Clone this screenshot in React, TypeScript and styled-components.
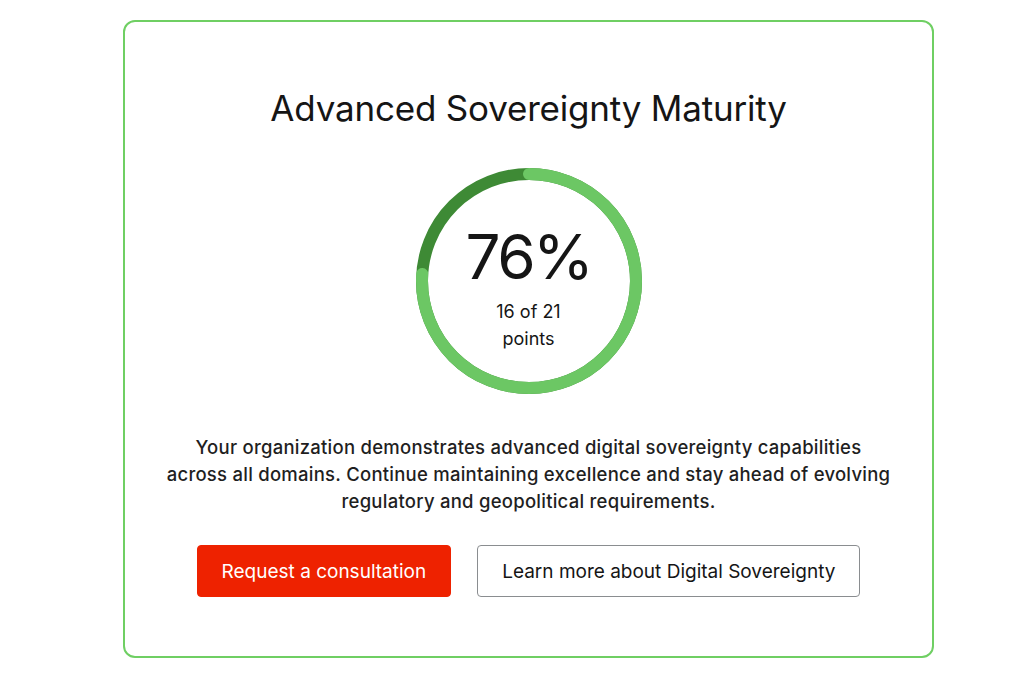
import styled, { createGlobalStyle } from "styled-components";

const GlobalStyle = createGlobalStyle`
  html, body {
    margin: 0;
    padding: 0;
    background: #ffffff;
  }
  body {
    font-family: Inter, "Noto Sans", "Liberation Sans", sans-serif;
    color: #151515;
  }
`;

const score = { percent: 76, points: 16, total: 21 };

const Page = styled.div`
  padding: 20px 90px 24px 123px;
`;

const Card = styled.section`
  box-sizing: border-box;
  width: 811px;
  height: 638px;
  border: 2px solid #6fcf63;
  border-radius: 12px;
  display: flex;
  flex-direction: column;
  align-items: center;
  padding-top: 62px;
`;

const Title = styled.h2`
  margin: 0;
  font-size: 35px;
  font-weight: 400;
  letter-spacing: -0.2px;
  line-height: 48px;
  color: #151515;
`;

const Gauge = styled.div`
  position: relative;
  width: 230px;
  height: 230px;
  margin-top: 34px;
`;

const GaugeLabel = styled.div`
  position: absolute;
  inset: 0;
  display: flex;
  flex-direction: column;
  align-items: center;
  justify-content: center;
  padding-top: 10px;
`;

const Percent = styled.div`
  font-size: 62px;
  font-weight: 400;
  letter-spacing: -2.5px;
  line-height: 74px;
  margin-bottom: 4px;
`;

const Points = styled.div`
  font-size: 18px;
  line-height: 27px;
  text-align: center;
  width: 80px;
`;

const Summary = styled.p`
  margin: 38px 0 0;
  text-align: center;
  font-size: 18.5px;
  font-weight: 500;
  letter-spacing: 0.25px;
  line-height: 27px;
  color: #1f1f1f;
`;

const Actions = styled.div`
  display: flex;
  gap: 26px;
  margin-top: 30px;
`;

const Button = styled.button<{ $primary?: boolean }>`
  box-sizing: border-box;
  height: 52px;
  padding: 0 24px;
  border-radius: 4px;
  font-family: inherit;
  font-size: 19px;
  font-weight: 400;
  cursor: pointer;
  border: 1px solid ${({ $primary }) => ($primary ? "#ee2200" : "#8a8d90")};
  background: ${({ $primary }) => ($primary ? "#ee2200" : "#ffffff")};
  color: ${({ $primary }) => ($primary ? "#ffffff" : "#151515")};
`;

const Ring = ({ percent }: { percent: number }) => {
  const r = 107;
  const c = 2 * Math.PI * r;
  return (
    <svg width="230" height="230" viewBox="0 0 230 230">
      <circle cx="115" cy="115" r={r} fill="none" stroke="#3e8a35" strokeWidth="12" />
      <circle
        cx="115"
        cy="115"
        r={r}
        fill="none"
        stroke="#6cc764"
        strokeWidth="12"
        strokeLinecap="round"
        strokeDasharray={`${(c * percent) / 100} ${c}`}
        transform="rotate(-90 115 115)"
      />
    </svg>
  );
};

export default function App() {
  return (
    <>
      <GlobalStyle />
      <Page>
        <Card>
          <Title>Advanced Sovereignty Maturity</Title>
          <Gauge>
            <Ring percent={score.percent} />
            <GaugeLabel>
              <Percent>{score.percent}%</Percent>
              <Points>
                {score.points} of {score.total} points
              </Points>
            </GaugeLabel>
          </Gauge>
          <Summary>
            Your organization demonstrates advanced digital sovereignty capabilities
            <br />
            across all domains. Continue maintaining excellence and stay ahead of evolving
            <br />
            regulatory and geopolitical requirements.
          </Summary>
          <Actions>
            <Button $primary>Request a consultation</Button>
            <Button>Learn more about Digital Sovereignty</Button>
          </Actions>
        </Card>
      </Page>
    </>
  );
}
